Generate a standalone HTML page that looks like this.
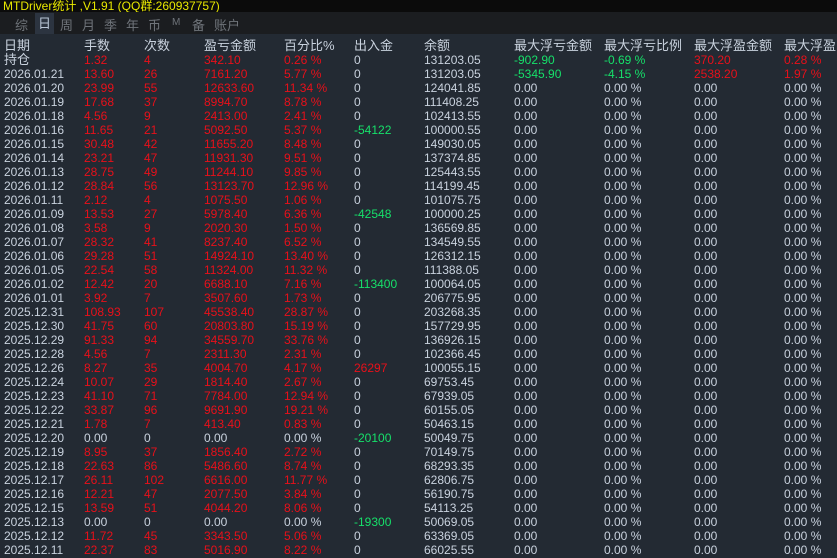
<!DOCTYPE html>
<html><head><meta charset="utf-8"><style>
*{margin:0;padding:0;box-sizing:border-box}
body{width:837px;height:558px;overflow:hidden;background:#232a33;font-family:"Liberation Sans","Noto Sans CJK SC",sans-serif;font-size:12px;color:#c9d2de}
#top{position:absolute;left:0;top:0;width:837px;height:12px;background:#0b0b0b}
#title{position:absolute;left:3px;top:-3px;color:#e8e800;font-size:12px;white-space:nowrap}
#tabs{position:absolute;left:0;top:12px;width:837px;height:22px;background:#1b1d20}
#tabs span{position:absolute;top:3px;font-size:13px;color:#6f747a}
#tabs .a{background:#2c3440;color:#b9c6d6;padding:0 3px;top:1px;height:21px;line-height:21px}
.r{position:absolute;left:0;height:14px;line-height:14px;white-space:nowrap;width:837px}
.r span{position:absolute;top:0}
.c0{left:4px}.c1{left:84px}.c2{left:144px}.c3{left:204px}.c4{left:284px}.c5{left:354px}.c6{left:424px}.c7{left:514px}.c8{left:604px}.c9{left:694px}.c10{left:784px}
.h{font-size:13px;color:#c9d2de}
.red .c1,.red .c2,.red .c3,.red .c4{color:#e8101a}
.g{color:#16e06a}.rd{color:#e8101a}
</style></head><body>
<div id="top"><div id="title">MTDriver统计 ,V1.91 (QQ群:260937757)</div></div>
<div id="tabs"><span style="left:15px">综</span><span class="a" style="left:35px">日</span><span style="left:60px">周</span><span style="left:82px">月</span><span style="left:104px">季</span><span style="left:126px">年</span><span style="left:148px">币</span><span style="left:172px;font-size:10px;top:5px">M</span><span style="left:192px">备</span><span style="left:214px">账户</span></div>
<div class="r h" style="top:39px"><span class="c0">日期</span><span class="c1">手数</span><span class="c2">次数</span><span class="c3">盈亏金额</span><span class="c4">百分比%</span><span class="c5">出入金</span><span class="c6">余额</span><span class="c7">最大浮亏金额</span><span class="c8">最大浮亏比例</span><span class="c9">最大浮盈金额</span><span class="c10">最大浮盈比</span></div>
<div class="r red" style="top:53px"><span class="c0" style="font-size:13px">持仓</span><span class="c1">1.32</span><span class="c2">4</span><span class="c3">342.10</span><span class="c4">0.26 %</span><span class="c5">0</span><span class="c6">131203.05</span><span class="c7 g">-902.90</span><span class="c8 g">-0.69 %</span><span class="c9 rd">370.20</span><span class="c10 rd">0.28 %</span></div>
<div class="r red" style="top:67px"><span class="c0">2026.01.21</span><span class="c1">13.60</span><span class="c2">26</span><span class="c3">7161.20</span><span class="c4">5.77 %</span><span class="c5">0</span><span class="c6">131203.05</span><span class="c7 g">-5345.90</span><span class="c8 g">-4.15 %</span><span class="c9 rd">2538.20</span><span class="c10 rd">1.97 %</span></div>
<div class="r red" style="top:81px"><span class="c0">2026.01.20</span><span class="c1">23.99</span><span class="c2">55</span><span class="c3">12633.60</span><span class="c4">11.34 %</span><span class="c5">0</span><span class="c6">124041.85</span><span class="c7">0.00</span><span class="c8">0.00 %</span><span class="c9">0.00</span><span class="c10">0.00 %</span></div>
<div class="r red" style="top:95px"><span class="c0">2026.01.19</span><span class="c1">17.68</span><span class="c2">37</span><span class="c3">8994.70</span><span class="c4">8.78 %</span><span class="c5">0</span><span class="c6">111408.25</span><span class="c7">0.00</span><span class="c8">0.00 %</span><span class="c9">0.00</span><span class="c10">0.00 %</span></div>
<div class="r red" style="top:109px"><span class="c0">2026.01.18</span><span class="c1">4.56</span><span class="c2">9</span><span class="c3">2413.00</span><span class="c4">2.41 %</span><span class="c5">0</span><span class="c6">102413.55</span><span class="c7">0.00</span><span class="c8">0.00 %</span><span class="c9">0.00</span><span class="c10">0.00 %</span></div>
<div class="r red" style="top:123px"><span class="c0">2026.01.16</span><span class="c1">11.65</span><span class="c2">21</span><span class="c3">5092.50</span><span class="c4">5.37 %</span><span class="c5 g">-54122</span><span class="c6">100000.55</span><span class="c7">0.00</span><span class="c8">0.00 %</span><span class="c9">0.00</span><span class="c10">0.00 %</span></div>
<div class="r red" style="top:137px"><span class="c0">2026.01.15</span><span class="c1">30.48</span><span class="c2">42</span><span class="c3">11655.20</span><span class="c4">8.48 %</span><span class="c5">0</span><span class="c6">149030.05</span><span class="c7">0.00</span><span class="c8">0.00 %</span><span class="c9">0.00</span><span class="c10">0.00 %</span></div>
<div class="r red" style="top:151px"><span class="c0">2026.01.14</span><span class="c1">23.21</span><span class="c2">47</span><span class="c3">11931.30</span><span class="c4">9.51 %</span><span class="c5">0</span><span class="c6">137374.85</span><span class="c7">0.00</span><span class="c8">0.00 %</span><span class="c9">0.00</span><span class="c10">0.00 %</span></div>
<div class="r red" style="top:165px"><span class="c0">2026.01.13</span><span class="c1">28.75</span><span class="c2">49</span><span class="c3">11244.10</span><span class="c4">9.85 %</span><span class="c5">0</span><span class="c6">125443.55</span><span class="c7">0.00</span><span class="c8">0.00 %</span><span class="c9">0.00</span><span class="c10">0.00 %</span></div>
<div class="r red" style="top:179px"><span class="c0">2026.01.12</span><span class="c1">28.84</span><span class="c2">56</span><span class="c3">13123.70</span><span class="c4">12.96 %</span><span class="c5">0</span><span class="c6">114199.45</span><span class="c7">0.00</span><span class="c8">0.00 %</span><span class="c9">0.00</span><span class="c10">0.00 %</span></div>
<div class="r red" style="top:193px"><span class="c0">2026.01.11</span><span class="c1">2.12</span><span class="c2">4</span><span class="c3">1075.50</span><span class="c4">1.06 %</span><span class="c5">0</span><span class="c6">101075.75</span><span class="c7">0.00</span><span class="c8">0.00 %</span><span class="c9">0.00</span><span class="c10">0.00 %</span></div>
<div class="r red" style="top:207px"><span class="c0">2026.01.09</span><span class="c1">13.53</span><span class="c2">27</span><span class="c3">5978.40</span><span class="c4">6.36 %</span><span class="c5 g">-42548</span><span class="c6">100000.25</span><span class="c7">0.00</span><span class="c8">0.00 %</span><span class="c9">0.00</span><span class="c10">0.00 %</span></div>
<div class="r red" style="top:221px"><span class="c0">2026.01.08</span><span class="c1">3.58</span><span class="c2">9</span><span class="c3">2020.30</span><span class="c4">1.50 %</span><span class="c5">0</span><span class="c6">136569.85</span><span class="c7">0.00</span><span class="c8">0.00 %</span><span class="c9">0.00</span><span class="c10">0.00 %</span></div>
<div class="r red" style="top:235px"><span class="c0">2026.01.07</span><span class="c1">28.32</span><span class="c2">41</span><span class="c3">8237.40</span><span class="c4">6.52 %</span><span class="c5">0</span><span class="c6">134549.55</span><span class="c7">0.00</span><span class="c8">0.00 %</span><span class="c9">0.00</span><span class="c10">0.00 %</span></div>
<div class="r red" style="top:249px"><span class="c0">2026.01.06</span><span class="c1">29.28</span><span class="c2">51</span><span class="c3">14924.10</span><span class="c4">13.40 %</span><span class="c5">0</span><span class="c6">126312.15</span><span class="c7">0.00</span><span class="c8">0.00 %</span><span class="c9">0.00</span><span class="c10">0.00 %</span></div>
<div class="r red" style="top:263px"><span class="c0">2026.01.05</span><span class="c1">22.54</span><span class="c2">58</span><span class="c3">11324.00</span><span class="c4">11.32 %</span><span class="c5">0</span><span class="c6">111388.05</span><span class="c7">0.00</span><span class="c8">0.00 %</span><span class="c9">0.00</span><span class="c10">0.00 %</span></div>
<div class="r red" style="top:277px"><span class="c0">2026.01.02</span><span class="c1">12.42</span><span class="c2">20</span><span class="c3">6688.10</span><span class="c4">7.16 %</span><span class="c5 g">-113400</span><span class="c6">100064.05</span><span class="c7">0.00</span><span class="c8">0.00 %</span><span class="c9">0.00</span><span class="c10">0.00 %</span></div>
<div class="r red" style="top:291px"><span class="c0">2026.01.01</span><span class="c1">3.92</span><span class="c2">7</span><span class="c3">3507.60</span><span class="c4">1.73 %</span><span class="c5">0</span><span class="c6">206775.95</span><span class="c7">0.00</span><span class="c8">0.00 %</span><span class="c9">0.00</span><span class="c10">0.00 %</span></div>
<div class="r red" style="top:305px"><span class="c0">2025.12.31</span><span class="c1">108.93</span><span class="c2">107</span><span class="c3">45538.40</span><span class="c4">28.87 %</span><span class="c5">0</span><span class="c6">203268.35</span><span class="c7">0.00</span><span class="c8">0.00 %</span><span class="c9">0.00</span><span class="c10">0.00 %</span></div>
<div class="r red" style="top:319px"><span class="c0">2025.12.30</span><span class="c1">41.75</span><span class="c2">60</span><span class="c3">20803.80</span><span class="c4">15.19 %</span><span class="c5">0</span><span class="c6">157729.95</span><span class="c7">0.00</span><span class="c8">0.00 %</span><span class="c9">0.00</span><span class="c10">0.00 %</span></div>
<div class="r red" style="top:333px"><span class="c0">2025.12.29</span><span class="c1">91.33</span><span class="c2">94</span><span class="c3">34559.70</span><span class="c4">33.76 %</span><span class="c5">0</span><span class="c6">136926.15</span><span class="c7">0.00</span><span class="c8">0.00 %</span><span class="c9">0.00</span><span class="c10">0.00 %</span></div>
<div class="r red" style="top:347px"><span class="c0">2025.12.28</span><span class="c1">4.56</span><span class="c2">7</span><span class="c3">2311.30</span><span class="c4">2.31 %</span><span class="c5">0</span><span class="c6">102366.45</span><span class="c7">0.00</span><span class="c8">0.00 %</span><span class="c9">0.00</span><span class="c10">0.00 %</span></div>
<div class="r red" style="top:361px"><span class="c0">2025.12.26</span><span class="c1">8.27</span><span class="c2">35</span><span class="c3">4004.70</span><span class="c4">4.17 %</span><span class="c5 rd">26297</span><span class="c6">100055.15</span><span class="c7">0.00</span><span class="c8">0.00 %</span><span class="c9">0.00</span><span class="c10">0.00 %</span></div>
<div class="r red" style="top:375px"><span class="c0">2025.12.24</span><span class="c1">10.07</span><span class="c2">29</span><span class="c3">1814.40</span><span class="c4">2.67 %</span><span class="c5">0</span><span class="c6">69753.45</span><span class="c7">0.00</span><span class="c8">0.00 %</span><span class="c9">0.00</span><span class="c10">0.00 %</span></div>
<div class="r red" style="top:389px"><span class="c0">2025.12.23</span><span class="c1">41.10</span><span class="c2">71</span><span class="c3">7784.00</span><span class="c4">12.94 %</span><span class="c5">0</span><span class="c6">67939.05</span><span class="c7">0.00</span><span class="c8">0.00 %</span><span class="c9">0.00</span><span class="c10">0.00 %</span></div>
<div class="r red" style="top:403px"><span class="c0">2025.12.22</span><span class="c1">33.87</span><span class="c2">96</span><span class="c3">9691.90</span><span class="c4">19.21 %</span><span class="c5">0</span><span class="c6">60155.05</span><span class="c7">0.00</span><span class="c8">0.00 %</span><span class="c9">0.00</span><span class="c10">0.00 %</span></div>
<div class="r red" style="top:417px"><span class="c0">2025.12.21</span><span class="c1">1.78</span><span class="c2">7</span><span class="c3">413.40</span><span class="c4">0.83 %</span><span class="c5">0</span><span class="c6">50463.15</span><span class="c7">0.00</span><span class="c8">0.00 %</span><span class="c9">0.00</span><span class="c10">0.00 %</span></div>
<div class="r" style="top:431px"><span class="c0">2025.12.20</span><span class="c1">0.00</span><span class="c2">0</span><span class="c3">0.00</span><span class="c4">0.00 %</span><span class="c5 g">-20100</span><span class="c6">50049.75</span><span class="c7">0.00</span><span class="c8">0.00 %</span><span class="c9">0.00</span><span class="c10">0.00 %</span></div>
<div class="r red" style="top:445px"><span class="c0">2025.12.19</span><span class="c1">8.95</span><span class="c2">37</span><span class="c3">1856.40</span><span class="c4">2.72 %</span><span class="c5">0</span><span class="c6">70149.75</span><span class="c7">0.00</span><span class="c8">0.00 %</span><span class="c9">0.00</span><span class="c10">0.00 %</span></div>
<div class="r red" style="top:459px"><span class="c0">2025.12.18</span><span class="c1">22.63</span><span class="c2">86</span><span class="c3">5486.60</span><span class="c4">8.74 %</span><span class="c5">0</span><span class="c6">68293.35</span><span class="c7">0.00</span><span class="c8">0.00 %</span><span class="c9">0.00</span><span class="c10">0.00 %</span></div>
<div class="r red" style="top:473px"><span class="c0">2025.12.17</span><span class="c1">26.11</span><span class="c2">102</span><span class="c3">6616.00</span><span class="c4">11.77 %</span><span class="c5">0</span><span class="c6">62806.75</span><span class="c7">0.00</span><span class="c8">0.00 %</span><span class="c9">0.00</span><span class="c10">0.00 %</span></div>
<div class="r red" style="top:487px"><span class="c0">2025.12.16</span><span class="c1">12.21</span><span class="c2">47</span><span class="c3">2077.50</span><span class="c4">3.84 %</span><span class="c5">0</span><span class="c6">56190.75</span><span class="c7">0.00</span><span class="c8">0.00 %</span><span class="c9">0.00</span><span class="c10">0.00 %</span></div>
<div class="r red" style="top:501px"><span class="c0">2025.12.15</span><span class="c1">13.59</span><span class="c2">51</span><span class="c3">4044.20</span><span class="c4">8.06 %</span><span class="c5">0</span><span class="c6">54113.25</span><span class="c7">0.00</span><span class="c8">0.00 %</span><span class="c9">0.00</span><span class="c10">0.00 %</span></div>
<div class="r" style="top:515px"><span class="c0">2025.12.13</span><span class="c1">0.00</span><span class="c2">0</span><span class="c3">0.00</span><span class="c4">0.00 %</span><span class="c5 g">-19300</span><span class="c6">50069.05</span><span class="c7">0.00</span><span class="c8">0.00 %</span><span class="c9">0.00</span><span class="c10">0.00 %</span></div>
<div class="r red" style="top:529px"><span class="c0">2025.12.12</span><span class="c1">11.72</span><span class="c2">45</span><span class="c3">3343.50</span><span class="c4">5.06 %</span><span class="c5">0</span><span class="c6">63369.05</span><span class="c7">0.00</span><span class="c8">0.00 %</span><span class="c9">0.00</span><span class="c10">0.00 %</span></div>
<div class="r red" style="top:543px"><span class="c0">2025.12.11</span><span class="c1">22.37</span><span class="c2">83</span><span class="c3">5016.90</span><span class="c4">8.22 %</span><span class="c5">0</span><span class="c6">66025.55</span><span class="c7">0.00</span><span class="c8">0.00 %</span><span class="c9">0.00</span><span class="c10">0.00 %</span></div>
</body></html>
